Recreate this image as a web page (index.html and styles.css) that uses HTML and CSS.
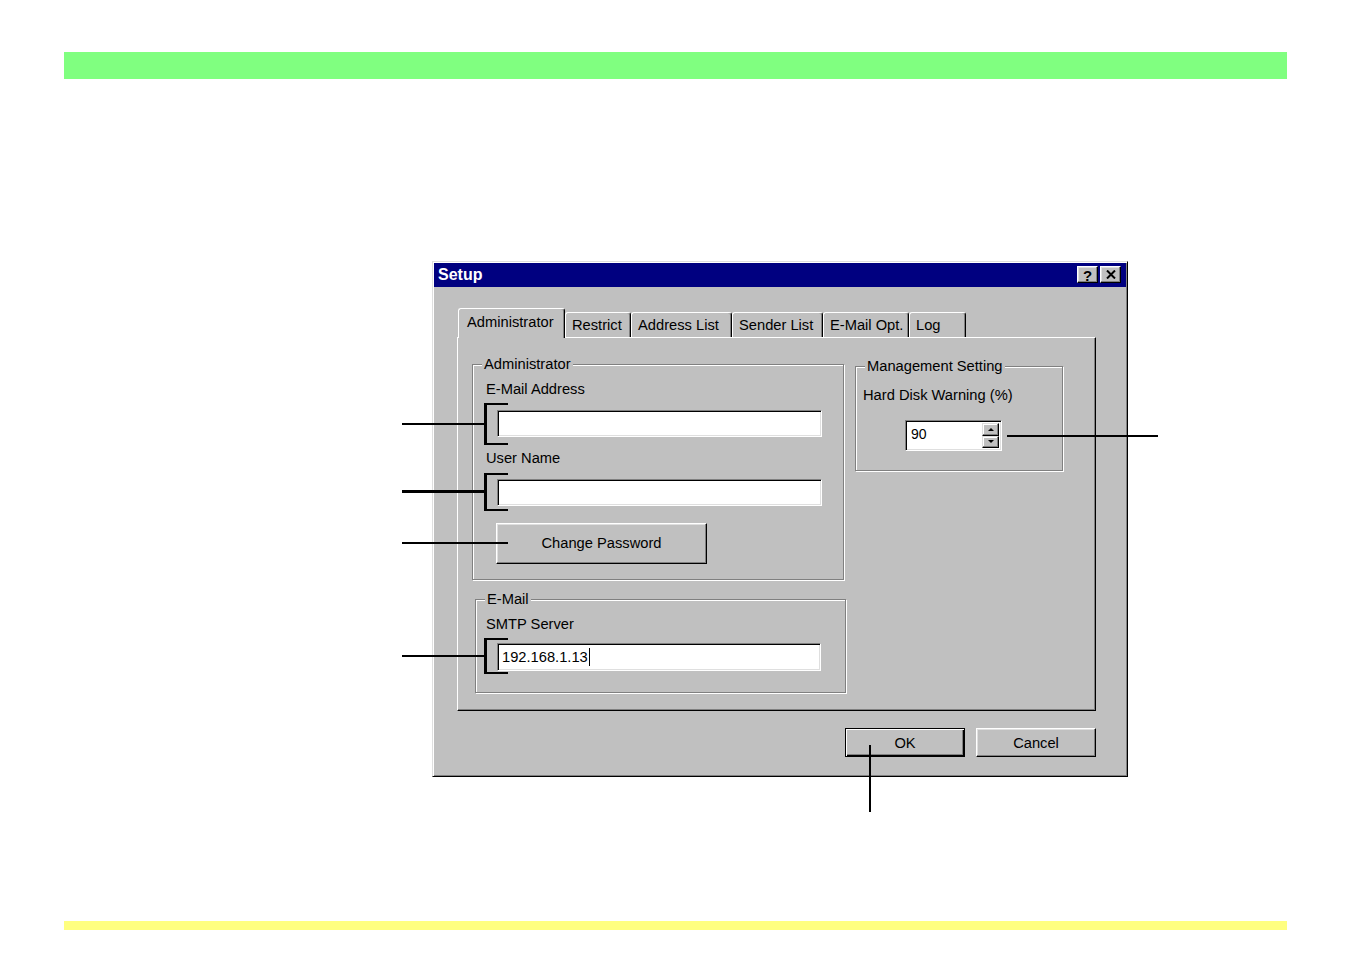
FILE: index.html
```html
<!DOCTYPE html>
<html>
<head>
<meta charset="utf-8">
<title>Setup</title>
<link rel="stylesheet" href="styles.css">
</head>
<body>
<div class="page">
  <div class="bar-green"></div>
  <div class="stage">
    <div class="dialog">
      <div class="titlebar">
        <span class="title">Setup</span>
        <div class="tb-btns">
          <div class="tb-btn tb-help">?</div>
          <div class="tb-btn">
            <svg width="10" height="9" viewBox="0 0 10 9"><path d="M1 0.5 L9 8.5 M9 0.5 L1 8.5" stroke="#000" stroke-width="2" fill="none"/></svg>
          </div>
        </div>
      </div>
      <div class="dlg-body">
        <div class="tabs">
          <div class="tab active t-admin">Administrator</div>
          <div class="tab t-restrict">Restrict</div>
          <div class="tab t-address">Address List</div>
          <div class="tab t-sender">Sender List</div>
          <div class="tab t-emailopt">E-Mail Opt.</div>
          <div class="tab t-log">Log</div>
        </div>
        <div class="panel">
          <div class="left-col">
            <div class="group g-admin">
              <span class="legend">Administrator</span>
              <div class="label">E-Mail Address</div>
              <div class="field f-first"></div>
              <div class="label l-gap">User Name</div>
              <div class="field f-first"></div>
              <div class="btn btn-pw">Change Password</div>
            </div>
            <div class="group g-email">
              <span class="legend">E-Mail</span>
              <div class="label">SMTP Server</div>
              <div class="field f-smtp">192.168.1.13<span class="caret"></span></div>
            </div>
          </div>
          <div class="group g-mgmt">
            <span class="legend">Management Setting</span>
            <div class="label">Hard Disk Warning (%)</div>
            <div class="spin">
              <span class="spin-val">90</span>
              <div class="spin-btns">
                <div class="spin-btn"><span class="arr-up"></span></div>
                <div class="spin-btn"><span class="arr-down"></span></div>
              </div>
            </div>
          </div>
        </div>
        <div class="actions">
          <div class="btn btn-dlg btn-default">OK</div>
          <div class="btn btn-dlg">Cancel</div>
        </div>
      </div>
    </div>

    <div class="callout c-line1"></div>
    <div class="bracket b1"></div>
    <div class="callout c-line2"></div>
    <div class="bracket b2"></div>
    <div class="callout c-line3"></div>
    <div class="callout c-line4"></div>
    <div class="bracket b4"></div>
    <div class="callout c-right"></div>
    <div class="callout c-ok"></div>
  </div>
  <div class="bar-yellow"></div>
</div>
</body>
</html>
```
FILE: styles.css
```css
* { box-sizing: border-box; }
html, body { margin: 0; padding: 0; background: #fff; }
body {
  font-family: "Liberation Sans", Arial, sans-serif;
  font-size: 14.7px;
  color: #000;
}
.page { width: 1352px; height: 954px; overflow: hidden; }

.bar-green {
  margin: 52px 0 0 64px;
  width: 1223px;
  height: 27px;
  background: #80ff80;
}
.bar-yellow {
  margin: 144px 0 0 64px;
  width: 1223px;
  height: 9px;
  background: #ffff80;
}

.stage {
  position: relative;
  margin: 182px 0 0 432px;
  width: 696px;
}

.dialog {
  width: 696px;
  height: 516px;
  background: #c0c0c0;
  border: 1px solid;
  border-color: #dfdfdf #000 #000 #dfdfdf;
  box-shadow: inset 1px 1px #fff, inset -1px -1px #808080;
  padding: 1px;
}

.titlebar {
  height: 24px;
  background: #000080;
  display: flex;
  align-items: center;
  justify-content: space-between;
  padding: 0 5px 0 4px;
}
.title {
  color: #fff;
  font-weight: bold;
  font-size: 16px;
  line-height: 24px;
}
.tb-btns { display: flex; gap: 2px; margin-top: -1px; }
.tb-btn {
  width: 21px;
  height: 17px;
  background: #c0c0c0;
  border: 1px solid;
  border-color: #fff #000 #000 #fff;
  box-shadow: inset -1px -1px #808080, inset 1px 1px #dfdfdf;
  display: flex;
  align-items: center;
  justify-content: center;
}
.tb-help { font-weight: bold; font-size: 15px; line-height: 1; padding-top: 1px; }

.dlg-body { padding: 21px 0 0 23px; }

.tabs {
  position: relative;
  z-index: 1;
  display: flex;
  align-items: flex-end;
  height: 29px;
  padding-left: 1px;
}
.tab {
  height: 25px;
  background: #c0c0c0;
  border-top: 1px solid #fff;
  border-left: 1px solid #fff;
  border-right: 1px solid #000;
  box-shadow: inset -1px 0 #808080;
  border-radius: 3px 3px 0 0;
  padding: 3px 0 0 6px;
  line-height: 18px;
  white-space: nowrap;
}
.tab.active {
  height: 30px;
  margin-bottom: -1px;
  padding: 4px 0 0 8px;
}
.t-admin { width: 107px; }
.t-restrict { width: 66px; }
.t-address { width: 101px; }
.t-sender { width: 91px; }
.t-emailopt { width: 86px; }
.t-log { width: 57px; }

.panel {
  width: 639px;
  height: 374px;
  border: 1px solid;
  border-color: #fff #000 #000 #fff;
  box-shadow: inset -1px -1px #808080;
  display: flex;
  align-items: flex-start;
  padding: 26px 0 0 14px;
}
.left-col { width: 375px; display: flex; flex-direction: column; align-items: flex-start; }

.group {
  position: relative;
  border: 1px solid #808080;
  box-shadow: 1px 1px 0 #fff, inset 1px 1px 0 #fff;
  display: flex;
  flex-direction: column;
  align-items: flex-start;
}
.legend {
  position: absolute;
  top: -10px;
  left: 9px;
  padding: 0 2px;
  background: #c0c0c0;
  line-height: 18px;
  white-space: nowrap;
}
.label { line-height: 18px; white-space: nowrap; }
.l-gap { margin-top: 12px; }

.g-admin { width: 372px; height: 216px; padding: 15px 0 0 13px; }
.g-email { width: 371px; height: 94px; margin: 19px 0 0 3px; padding: 15px 0 0 10px; }
.g-mgmt { width: 208px; height: 105px; margin: 2px 0 0 8px; padding: 19px 0 0 7px; }

.field {
  width: 325px;
  height: 27px;
  background: #fff;
  border: 1px solid;
  border-color: #808080 #fff #fff #808080;
  box-shadow: inset 1px 1px #000, inset -1px -1px #dfdfdf;
  padding: 0 0 0 4px;
  display: flex;
  align-items: center;
  line-height: 18px;
}
.f-first { margin: 12px 0 0 11px; }
.f-smtp { width: 324px; height: 28px; margin: 10px 0 0 11px; }
.caret { display: inline-block; width: 1px; height: 18px; background: #000; margin-left: 1px; }

.btn {
  background: #c0c0c0;
  border: 1px solid;
  border-color: #fff #000 #000 #fff;
  box-shadow: inset -1px -1px #808080, inset 1px 1px #dfdfdf;
  display: flex;
  align-items: center;
  justify-content: center;
  line-height: 18px;
  white-space: nowrap;
}
.btn-pw { width: 211px; height: 41px; margin: 17px 0 0 10px; padding-bottom: 2px; }

.spin {
  width: 97px;
  height: 31px;
  margin: 16px 0 0 42px;
  background: #fff;
  border: 1px solid;
  border-color: #808080 #fff #fff #808080;
  box-shadow: inset 1px 1px #000, inset -1px -1px #dfdfdf;
  padding: 2px 2px 2px 5px;
  display: flex;
  align-items: stretch;
}
.spin-val { flex: 1; display: flex; align-items: center; font-size: 14px; padding-bottom: 3px; }
.spin-btns { width: 17px; display: flex; flex-direction: column; justify-content: space-between; }
.spin-btn {
  height: 13px;
  background: #c0c0c0;
  border: 1px solid;
  border-color: #dfdfdf #000 #000 #dfdfdf;
  box-shadow: inset -1px -1px #808080, inset 1px 1px #fff;
  display: flex;
  align-items: center;
  justify-content: center;
}
.arr-up, .arr-down { width: 0; height: 0; border-left: 3px solid transparent; border-right: 3px solid transparent; }
.arr-up { border-bottom: 3px solid #000; }
.arr-down { border-top: 3px solid #000; }

.actions {
  width: 639px;
  display: flex;
  justify-content: flex-end;
  gap: 11px;
  margin-top: 17px;
}
.btn-dlg { width: 120px; height: 29px; }
.btn-default {
  border-color: #000;
  box-shadow: inset 1px 1px #fff, inset -1px -1px #000, inset -2px -2px #808080;
}

.callout { position: absolute; background: #000; }
.bracket {
  position: absolute;
  width: 24px;
  border-left: 3px solid #000;
  border-top: 2px solid #000;
  border-bottom: 2px solid #000;
}
.c-line1 { left: -30px; top: 162px; width: 83px; height: 2px; }
.b1 { left: 52px; top: 142px; height: 42px; }
.c-line2 { left: -30px; top: 229px; width: 83px; height: 3px; }
.b2 { left: 52px; top: 212px; height: 38px; }
.c-line3 { left: -30px; top: 281px; width: 106px; height: 2px; }
.c-line4 { left: -30px; top: 394px; width: 83px; height: 2px; }
.b4 { left: 52px; top: 377px; height: 36px; }
.c-right { left: 575px; top: 174px; width: 151px; height: 2px; }
.c-ok { left: 437px; top: 484px; width: 2px; height: 67px; }
```
